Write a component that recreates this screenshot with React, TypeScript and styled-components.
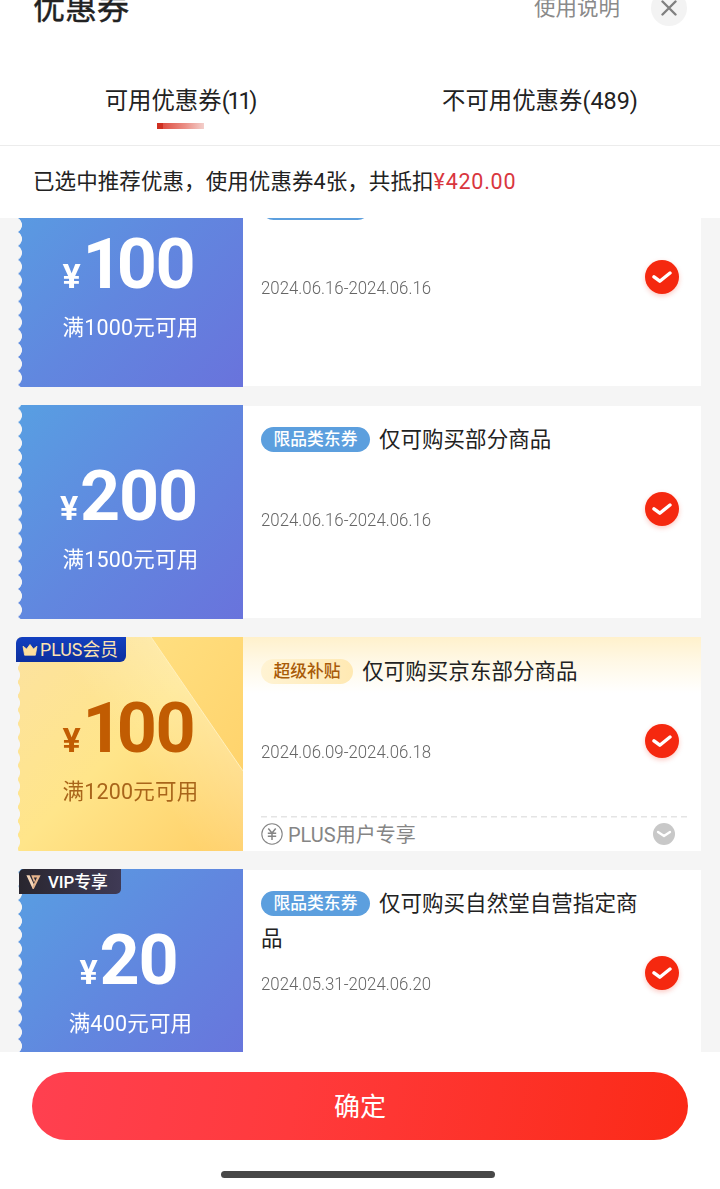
import React from "react";
import styled, { createGlobalStyle, css } from "styled-components";

const GlobalStyle = createGlobalStyle`
  * { box-sizing: border-box; }
  html, body { margin: 0; padding: 0; background: #fff; overflow: hidden; }
  button { font: inherit; border: 0; padding: 0; background: none; }
`;

const Screen = styled.main`
  width: 720px;
  height: 1189px;
  display: flex;
  flex-direction: column;
  overflow: hidden;
  background: #fff;
  color: #222;
  font-family: Roboto, "Noto Sans CJK SC", sans-serif;
  font-weight: 400;
  white-space: nowrap;
`;

const Header = styled.header`
  flex: none;
  height: 56px;
  margin-top: -20px;
  padding: 0 33px;
  display: flex;
  align-items: center;
`;

const Title = styled.h1`
  margin: 0 auto 0 0;
  font-size: 32px;
  line-height: 40px;
  font-weight: 400;
  -webkit-text-stroke: 0.4px #222;
`;

const HelpLink = styled.span`
  margin-right: 31px;
  font-size: 21.5px;
  line-height: 30px;
  color: #8a8a8a;
`;

const CloseButton = styled.button`
  width: 36px;
  height: 36px;
  border-radius: 50%;
  background: #f3f3f3;
  display: grid;
  place-items: center;
`;

const Tabs = styled.nav`
  flex: none;
  height: 110px;
  display: flex;
  border-bottom: 1px solid #ececec;
`;

const Tab = styled.div`
  flex: 1;
  display: flex;
  flex-direction: column;
  align-items: center;
  padding-top: 49px;
  font-size: 23.4px;
  line-height: 32px;
`;

const Count = styled.span<{ $tight?: boolean }>`
  letter-spacing: ${({ $tight }) => ($tight ? "-2.2px" : "0")};
`;

const TabMark = styled.i`
  width: 47px;
  height: 6px;
  margin-top: 6px;
  background: linear-gradient(90deg, #cf3021 0 6px, #df5145 6px, #eb8f86 60%, #f3cfcb);
`;

const Summary = styled.p`
  flex: none;
  height: 72px;
  margin: 0;
  padding-left: 33px;
  font-size: 21.5px;
  line-height: 72px;
  letter-spacing: 0.08px;
`;

const Deduction = styled.span`
  color: #d9363e;
  letter-spacing: 0.75px;
`;

const ListViewport = styled.section`
  flex: none;
  height: 834px;
  overflow: hidden;
  background: #f5f5f5;
`;

const CouponList = styled.div`
  margin-top: -45px;
  padding: 0 19px 0 18px;
  display: flex;
  flex-direction: column;
  gap: 18px;
`;

const Card = styled.article`
  position: relative;
  flex: none;
  height: 214px;
  display: flex;
  align-items: center;
`;

const Face = styled.div<{ $gold?: boolean }>`
  position: relative;
  flex: none;
  width: 225px;
  height: 214px;
  padding-top: 56px;
  display: flex;
  flex-direction: column;
  align-items: center;
  overflow: hidden;
  ${({ $gold }) =>
    $gold
      ? css`
          color: #c15c02;
          background: linear-gradient(135deg, #fce2a0 0%, #ffe58a 48%, #ffce65 100%);
          mask: radial-gradient(circle at -7px 50%, transparent 8.6px, #000 9.4px) 0 3.4px / 100% 13.9px;
        `
      : css`
          color: #fff;
          background: linear-gradient(133deg, #589fe2 0%, #6187df 50%, #6973dc 100%);
          mask: radial-gradient(circle at -4px 50%, transparent 7.6px, #000 8.3px) 0 3.4px / 100% 13.9px;
        `}
`;

const Sheen = styled.svg`
  position: absolute;
  inset: 0;
`;

const Amount = styled.div`
  position: relative;
  padding-right: 4px;
  display: flex;
  align-items: baseline;
  font-weight: 700;
  font-size: 70px;
  line-height: 70px;
  letter-spacing: -1.2px;
`;

const Yen = styled.span`
  margin-right: 3px;
  font-size: 34px;
  line-height: 33px;
`;

const LeadingOne = styled.span`
  letter-spacing: -6px;
`;

const Condition = styled.div<{ $gold?: boolean }>`
  position: relative;
  margin-top: 15px;
  font-size: 21.5px;
  line-height: 28px;
  letter-spacing: 0.2px;
  color: ${({ $gold }) => ($gold ? "#a9651a" : "#fff")};
`;

const Detail = styled.div<{ $gold?: boolean }>`
  flex: 1;
  height: ${({ $gold }) => ($gold ? 214 : 212)}px;
  display: flex;
  flex-direction: column;
  padding: ${({ $gold }) => ($gold ? 18 : 17)}px 10px 0 18px;
  background: ${({ $gold }) =>
    $gold ? "linear-gradient(180deg, #fff1cc 0px, #fff8e5 24px, #fff 56px)" : "#fff"};
`;

const Main = styled.div`
  position: relative;
  flex: none;
  height: 161px;
`;

const Name = styled.div`
  width: 390px;
  font-size: 21.5px;
  line-height: 34.5px;
  letter-spacing: 0.05px;
  white-space: normal;
  word-break: break-all;
`;

const Tag = styled.span<{ $gold?: boolean }>`
  display: inline-block;
  height: 25px;
  margin-right: 9px;
  padding: 0 12.5px;
  border-radius: 13px;
  vertical-align: 2px;
  font-size: 16.8px;
  line-height: 24px;
  font-weight: 500;
  letter-spacing: 0;
  color: ${({ $gold }) => ($gold ? "#a85a08" : "#fff")};
  background: ${({ $gold }) => ($gold ? "linear-gradient(90deg, #fff3d3, #ffe9b3)" : "#5c9fde")};
`;

const Validity = styled.time`
  position: absolute;
  left: 0;
  top: 85px;
  font-size: 18.8px;
  line-height: 24px;
  font-weight: 300;
  color: #666;
  transform: scaleX(0.895);
  transform-origin: left;
`;

const Check = styled.span`
  position: absolute;
  right: 12px;
  top: 69px;
  width: 34px;
  height: 34px;
  border-radius: 50%;
  background: #f5280f;
  box-shadow: 0 2px 5px rgba(245, 40, 15, 0.25);
  display: grid;
  place-items: center;
`;

const Extra = styled.div`
  height: 35px;
  display: flex;
  align-items: center;
  gap: 5px;
  padding-right: 16px;
  font-size: 20px;
  color: #858585;
  background: repeating-linear-gradient(90deg, #e4e4e4 0 6px, transparent 6px 10px) 0 0 / 100% 1.5px no-repeat;
`;

const ExtraText = styled.span`
  flex: 1;
`;

const PlusBadge = styled.div`
  position: absolute;
  left: -2px;
  top: 0;
  width: 110px;
  height: 25px;
  padding-left: 6px;
  display: flex;
  align-items: center;
  gap: 2px;
  border-radius: 6px 0 6px 0;
  background: linear-gradient(180deg, #123fc0, #0c2f9e);
  color: #fde3b0;
  font-size: 17.8px;
  line-height: 24px;
`;

const VipBadge = styled(PlusBadge)`
  left: 1px;
  width: 102px;
  padding-left: 7px;
  gap: 7px;
  border-radius: 5px 0 5px 0;
  background: linear-gradient(90deg, #29262f, #3f3a55);
  color: #fff;
  font-size: 16.8px;
  font-weight: 500;
`;

const Footer = styled.footer`
  flex: 1;
  padding-top: 20px;
  display: flex;
  flex-direction: column;
  align-items: center;
`;

const Confirm = styled.button`
  width: 656px;
  height: 68px;
  padding-bottom: 3px;
  border-radius: 34px;
  background: linear-gradient(100deg, #ff4050 0%, #ff3a3c 40%, #fb2a17 100%);
  color: #fff;
  font-size: 26px;
`;

const HomeIndicator = styled.i`
  width: 274px;
  height: 7px;
  margin: 31px 0 0 -4px;
  border-radius: 4px;
  background: #484848;
`;

const Crown = () => (
  <svg width="16" height="12" viewBox="0 0 16 12">
    <path d="M1 2.2 4.6 5 8 .5 11.4 5 15 2.2 13.4 11.2H2.6Z" fill="#ffdf9c" stroke="#ffdf9c" strokeWidth=".8" strokeLinejoin="round" />
  </svg>
);

const VipMark = () => (
  <svg width="15" height="16" viewBox="0 0 15 16">
    <path d="M.4 1.2H3.6L8 10.4 6.8 15Z" fill="#f5d5b8" />
    <path d="M5.2 1.2h9.4L7.8 15H6.8L6.6 12.4 11 3.6H7.8L9.2 6.4 8 8.6Z" fill="#e6b48c" />
  </svg>
);

type Coupon = {
  amount: string;
  condition: string;
  tag: string;
  name: string;
  validity: string;
  level?: "plus" | "vip";
};

const coupons: Coupon[] = [
  { amount: "100", condition: "满1000元可用", tag: "限品类东券", name: "仅可购买部分商品", validity: "2024.06.16-2024.06.16" },
  { amount: "200", condition: "满1500元可用", tag: "限品类东券", name: "仅可购买部分商品", validity: "2024.06.16-2024.06.16" },
  { amount: "100", condition: "满1200元可用", tag: "超级补贴", name: "仅可购买京东部分商品", validity: "2024.06.09-2024.06.18", level: "plus" },
  { amount: "20", condition: "满400元可用", tag: "限品类东券", name: "仅可购买自然堂自营指定商品", validity: "2024.05.31-2024.06.20", level: "vip" },
];

const CouponCard = ({ coupon }: { coupon: Coupon }) => {
  const gold = coupon.level === "plus";
  const startsWithOne = coupon.amount.startsWith("1");
  return (
    <Card>
      <Face $gold={gold}>
        {gold && (
          <Sheen width="225" height="214" viewBox="0 0 225 214">
            <defs>
              <linearGradient id="sheen" x1="0" y1="0" x2="1" y2="1">
                <stop offset="0" stopColor="#ffdf80" />
                <stop offset="1" stopColor="#ffd36c" />
              </linearGradient>
              <linearGradient id="glow" gradientUnits="userSpaceOnUse" x1="179" y1="67" x2="110" y2="115">
                <stop offset="0" stopColor="#fff" stopOpacity=".22" />
                <stop offset="1" stopColor="#fff" stopOpacity="0" />
              </linearGradient>
            </defs>
            <path d="M0 0H133L225 134V214H0Z" fill="url(#glow)" />
            <path d="M133 0H225V134Z" fill="url(#sheen)" />
            <path d="M133 0 225 134" stroke="#fff0bd" strokeWidth="1" />
          </Sheen>
        )}
        <Amount>
          <Yen>¥</Yen>
          {startsWithOne ? (
            <span>
              <LeadingOne>1</LeadingOne>
              {coupon.amount.slice(1)}
            </span>
          ) : (
            coupon.amount
          )}
        </Amount>
        <Condition $gold={gold}>{coupon.condition}</Condition>
      </Face>
      <Detail $gold={gold}>
        <Main>
          <Name>
            <Tag $gold={gold}>{coupon.tag}</Tag>
            {coupon.name}
          </Name>
          <Validity>{coupon.validity}</Validity>
          <Check>
            <svg width="20" height="14" viewBox="0 0 20 14">
              <path d="M2 6.8 7.8 11.2 18 3" fill="none" stroke="#fff" strokeWidth="3.4" strokeLinecap="round" strokeLinejoin="round" />
            </svg>
          </Check>
        </Main>
        {gold && (
          <Extra>
            <svg width="22" height="22" viewBox="0 0 22 22" fill="none" stroke="#858585">
              <circle cx="11" cy="11" r="10.2" strokeWidth="1.1" />
              <path d="M7.3 5.5 11 10l3.7-4.5M11 10v7M6.8 10.3h8.4M6.8 13.3h8.4" strokeWidth="1.5" />
            </svg>
            <ExtraText>PLUS用户专享</ExtraText>
            <svg width="22" height="22" viewBox="0 0 22 22" fill="none">
              <circle cx="11" cy="11" r="11" fill="#c8c8c8" />
              <path d="m5 9 6 4 6-4" stroke="#fff" strokeWidth="2.3" strokeLinecap="round" strokeLinejoin="round" />
            </svg>
          </Extra>
        )}
      </Detail>
      {coupon.level === "plus" && (
        <PlusBadge>
          <Crown />
          PLUS会员
        </PlusBadge>
      )}
      {coupon.level === "vip" && (
        <VipBadge>
          <VipMark />
          VIP专享
        </VipBadge>
      )}
    </Card>
  );
};

export default function App() {
  return (
    <Screen>
      <GlobalStyle />
      <Header>
        <Title>优惠券</Title>
        <HelpLink>使用说明</HelpLink>
        <CloseButton aria-label="关闭">
          <svg width="16" height="16" viewBox="0 0 16 16">
            <path d="M1.5 1.5l13 13M14.5 1.5l-13 13" stroke="#808080" strokeWidth="2.4" strokeLinecap="round" />
          </svg>
        </CloseButton>
      </Header>
      <Tabs>
        <Tab>
          <span>
            可用优惠券<Count $tight>(11)</Count>
          </span>
          <TabMark />
        </Tab>
        <Tab>
          <span>
            不可用优惠券<Count>(489)</Count>
          </span>
        </Tab>
      </Tabs>
      <Summary>
        已选中推荐优惠，使用优惠券4张，共抵扣<Deduction>¥420.00</Deduction>
      </Summary>
      <ListViewport>
        <CouponList>
          {coupons.map((coupon, i) => (
            <CouponCard key={i} coupon={coupon} />
          ))}
        </CouponList>
      </ListViewport>
      <Footer>
        <Confirm>确定</Confirm>
        <HomeIndicator />
      </Footer>
    </Screen>
  );
}
